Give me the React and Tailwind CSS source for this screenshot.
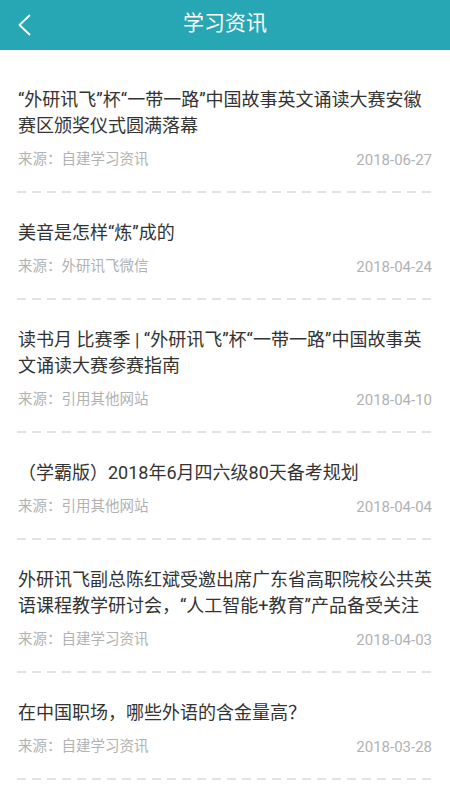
import React from "react";

const FONT = "font-['Roboto','Noto_Sans_CJK_SC',sans-serif]";

// News list shown on the page
const news = [
  {
    title: "“外研讯飞”杯“一带一路”中国故事英文诵读大赛安徽赛区颁奖仪式圆满落幕",
    source: "自建学习资讯",
    date: "2018-06-27",
  },
  { title: "美音是怎样“炼”成的", source: "外研讯飞微信", date: "2018-04-24" },
  {
    title: "读书月 比赛季 | “外研讯飞”杯“一带一路”中国故事英文诵读大赛参赛指南",
    source: "引用其他网站",
    date: "2018-04-10",
  },
  { title: "（学霸版）2018年6月四六级80天备考规划", source: "引用其他网站", date: "2018-04-04" },
  {
    title: "外研讯飞副总陈红斌受邀出席广东省高职院校公共英语课程教学研讨会，“人工智能+教育”产品备受关注",
    source: "自建学习资讯",
    date: "2018-04-03",
  },
  { title: "在中国职场，哪些外语的含金量高？", source: "自建学习资讯", date: "2018-03-28" },
];

export default function App() {
  return (
    <div className={`w-[450px] min-h-[800px] bg-white ${FONT}`}>
      {/* Top bar */}
      <header className="relative h-[50px] bg-[#27a6b3] flex items-center justify-center">
        <button className="absolute left-[16px] top-[14px] w-[16px] h-[22px] flex items-center justify-center">
          <svg width="14" height="22" viewBox="0 0 14 22" fill="none">
            <path d="M12.5 1.5 L2.5 11 L12.5 20.5" stroke="white" strokeWidth="1.8" strokeLinecap="round" strokeLinejoin="round" />
          </svg>
        </button>
        <h1 className="text-white text-[21px] leading-none -mt-[3px]">学习资讯</h1>
      </header>

      {/* Article list */}
      <ul className="pt-[10px]">
        {news.map((item, idx) => (
          <li key={idx} className="px-[17px]">
            <div className="pt-[27px] pb-[21px]">
              <p className="text-[18px] leading-[26px] text-[#333333] pl-[1px]">{item.title}</p>
              <div className="mt-[11px] flex items-center justify-between h-[20px]">
                <span className="text-[14.5px] text-[#b2b2b2] pl-[1px]">来源：{item.source}</span>
                <span className="text-[15px] text-[#b2b2b2] pr-[1px]">{item.date}</span>
              </div>
            </div>
            <div className="h-[2px] bg-[linear-gradient(to_right,#e3e3e3_9px,transparent_9px)] bg-[length:15px_2px] bg-repeat-x" />
          </li>
        ))}
      </ul>
    </div>
  );
}
